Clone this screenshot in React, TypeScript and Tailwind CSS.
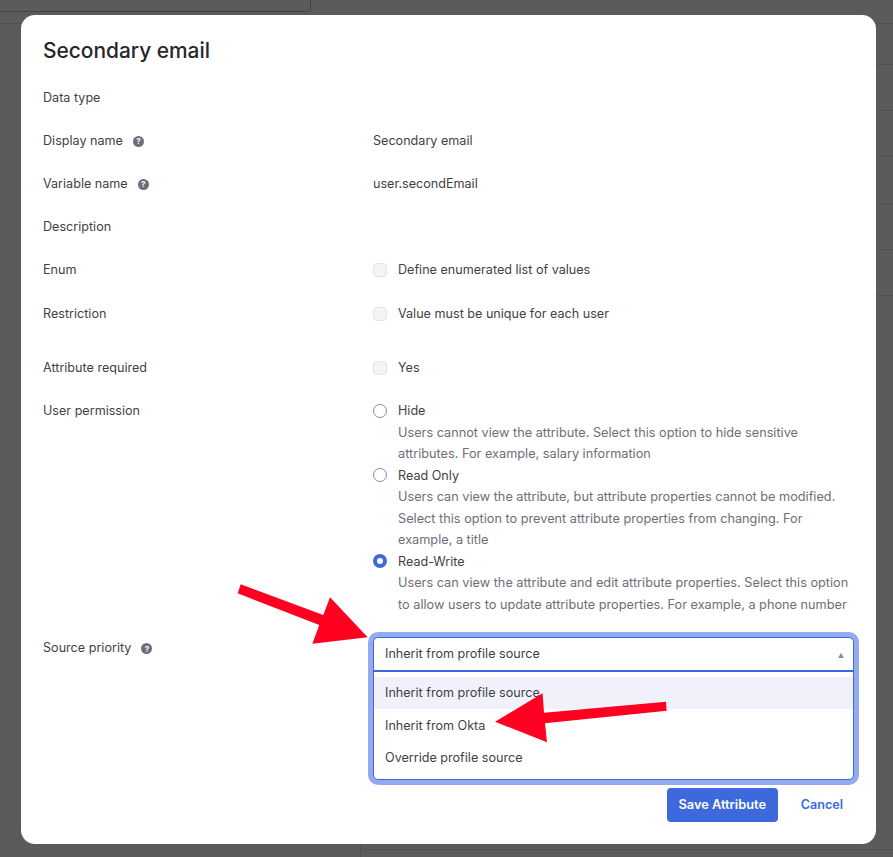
import { ReactNode } from "react";

function Help() {
    return (
        <span className="ml-[10px] flex size-[11px] items-center justify-center rounded-full bg-[#6e6e78] text-[8px] leading-none font-bold text-white">
            ?
        </span>
    );
}

function Row({ label, help, children, className }: { label: string; help?: boolean; children?: ReactNode; className: string }) {
    return (
        <div className={`flex items-center pt-[2px] ${className}`}>
            <div className="flex w-[330px] shrink-0 items-center">
                <span>{label}</span>
                {help && <Help />}
            </div>
            {children}
        </div>
    );
}

function Check({ label }: { label: string }) {
    return (
        <div className="flex items-center">
            <span className="mr-[11px] size-[14px] rounded-[4px] border border-[#e1e1e8] bg-[#f4f4f6]" />
            <span>{label}</span>
        </div>
    );
}

function Radio({ label, checked, lines }: { label: string; checked?: boolean; lines: string[] }) {
    return (
        <div>
            <div className="flex h-[21.5px] items-center">
                {checked ? (
                    <span className="mr-[11px] size-[14px] rounded-full border-[4px] border-[#3d69dc] bg-white" />
                ) : (
                    <span className="mr-[11px] size-[14px] rounded-full border border-[#8c8c96] bg-white" />
                )}
                <span className="mt-[2px]">{label}</span>
            </div>
            {lines.map((line) => (
                <div key={line} className="ml-[25px] h-[21.5px] text-[12.72px] leading-[21px] whitespace-nowrap text-[#6e6e78]">
                    {line}
                </div>
            ))}
        </div>
    );
}

export default function App() {
    return (
        <div className="relative h-[857px] w-[893px] overflow-hidden bg-[#5b5b5b] pt-[15px] pl-[21px] font-['Inter',sans-serif] text-[12.6px] text-[#3f3f47]">
            {/* Dimmed page behind the modal */}
            <div className="absolute top-[-10px] left-[-10px] h-[22px] w-[321px] rounded-[4px] border border-[#444444]" />
            <div className="absolute top-[23px] left-0 h-px w-[21px] bg-[#505050]" />
            <div className="absolute top-[23px] right-0 h-px w-[17px] bg-[#505050]" />
            <div className="absolute top-[64px] right-0 h-px w-[17px] bg-[#505050]" />
            <div className="absolute top-[110px] right-0 h-px w-[17px] bg-[#505050]" />
            <div className="absolute top-[156px] right-0 h-px w-[17px] bg-[#505050]" />
            <div className="absolute top-[203px] right-0 h-px w-[17px] bg-[#505050]" />
            <div className="absolute top-[249px] right-0 h-px w-[17px] bg-[#505050]" />
            <div className="absolute top-[295px] right-0 h-px w-[17px] bg-[#505050]" />
            <div className="absolute top-[849px] right-0 left-[360px] h-px bg-[#505050]" />
            <div className="absolute top-[844px] left-[360px] h-[13px] w-px bg-[#505050]" />

            <div className="relative h-[829px] w-[855px] rounded-[14px] bg-white px-[22px]">
                <h1 className="h-[61px] pt-[21px] text-[20.9px] leading-[30px] font-medium text-[#26262c]">Secondary email</h1>
                <Row label="Data type" className="h-[43px]" />
                <Row label="Display name" help className="h-[43px]">
                    <span>Secondary email</span>
                </Row>
                <Row label="Variable name" help className="h-[43px]">
                    <span>user.secondEmail</span>
                </Row>
                <Row label="Description" className="h-[43px]" />
                <Row label="Enum" className="h-[43px]">
                    <Check label="Define enumerated list of values" />
                </Row>
                <Row label="Restriction" className="mt-px mb-[11px] h-[43px]">
                    <Check label="Value must be unique for each user" />
                </Row>
                <Row label="Attribute required" className="h-[43px]">
                    <Check label="Yes" />
                </Row>
                <div className="mt-[11px] flex">
                    <div className="h-[21.5px] w-[330px] shrink-0 leading-[21.5px]">User permission</div>
                    <div>
                        <Radio
                            label="Hide"
                            lines={[
                                "Users cannot view the attribute. Select this option to hide sensitive",
                                "attributes. For example, salary information",
                            ]}
                        />
                        <Radio
                            label="Read Only"
                            lines={[
                                "Users can view the attribute, but attribute properties cannot be modified.",
                                "Select this option to prevent attribute properties from changing. For",
                                "example, a title",
                            ]}
                        />
                        <Radio
                            label="Read-Write"
                            checked
                            lines={[
                                "Users can view the attribute and edit attribute properties. Select this option",
                                "to allow users to update attribute properties. For example, a phone number",
                            ]}
                        />
                    </div>
                </div>
                <div className="mt-[22px] flex">
                    <div className="flex h-[21.5px] w-[330px] shrink-0 items-center pt-[2px]">
                        <span>Source priority</span>
                        <Help />
                    </div>
                    <div className="h-[143px] w-[482px] rounded-[5px] border border-[#3d69dc] bg-white shadow-[0_0_0_5px_#93aaee]">
                        <div className="flex h-[34px] items-center justify-between border-b-2 border-[#3d69dc] pr-[9px] pl-[11px]">
                            <span>Inherit from profile source</span>
                            <span className="mt-[2px] size-0 border-x-[3.5px] border-b-[5px] border-x-transparent border-b-[#8c8c96]" />
                        </div>
                        <div className="pt-[5px]">
                            <div className="flex h-[32px] items-center bg-[#f1f1fb] pl-[11px]">Inherit from profile source</div>
                            <div className="mt-px flex h-[32px] items-center pl-[11px]">Inherit from Okta</div>
                            <div className="flex h-[32px] items-center pl-[11px]">Override profile source</div>
                        </div>
                    </div>
                </div>
                <div className="mt-[8px] flex items-center justify-end pr-[11px]">
                    <button className="h-[34px] w-[111px] rounded-[4px] bg-[#3d69dc] text-[12.8px] font-semibold text-white">Save Attribute</button>
                    <button className="ml-[23px] text-[12.6px] font-semibold text-[#3d69dc]">Cancel</button>
                </div>
            </div>

            {/* Red annotation arrows drawn over the screenshot */}
            <svg className="absolute top-0 left-0" width="893" height="857" viewBox="0 0 893 857">
                <polygon fill="#ff0020" points="240.7,584.3 323.3,615 330,597.3 367.7,637.3 312.3,643.7 319.3,625 237.7,593.3" />
                <polygon fill="#ff0020" points="666,701.7 544,712.7 542.6,693.3 495,721.7 547,742.3 545,723.3 666.7,710.7" />
            </svg>
        </div>
    );
}
